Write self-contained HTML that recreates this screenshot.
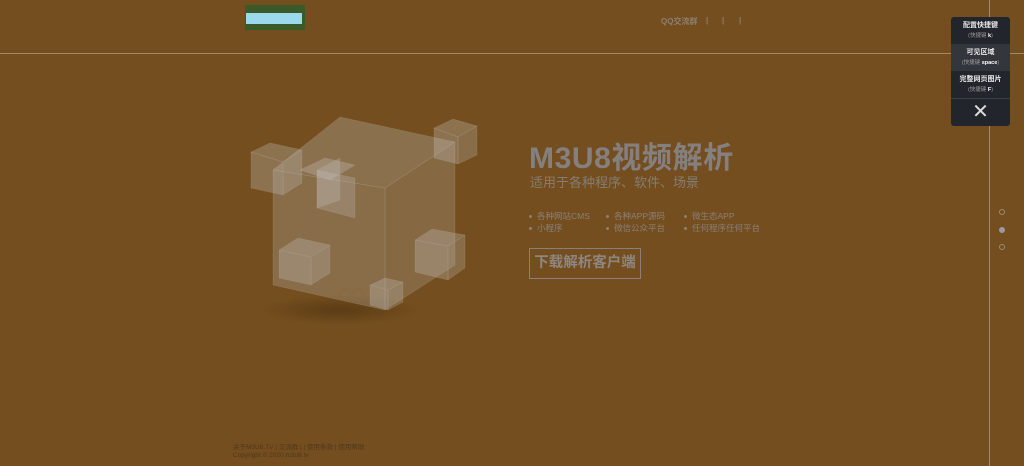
<!DOCTYPE html>
<html><head><meta charset="utf-8"><style>
*{margin:0;padding:0;box-sizing:border-box}
body{width:1024px;height:466px;overflow:hidden;background:#744e1e;font-family:"Liberation Sans","Noto Sans CJK SC",sans-serif;position:relative}
.a{position:absolute}
.hl{left:0;top:53px;width:1024px;height:1px;background:#a2886a}
.vl{left:989px;top:0;width:1px;height:466px;background:#a2886a}
.logo{left:245px;top:5px;width:60px;height:25px;background:#3a5a2a}
.logo i{position:absolute;left:1px;top:8px;width:56px;height:11px;background:#9cd9ec}
.nav{top:16px;font-size:8px;color:#8a8070;font-weight:bold;white-space:nowrap}
.t1{left:529px;top:133px;font-size:30px;font-weight:bold;color:#858080;letter-spacing:0.6px}
.t2{left:530px;top:172px;font-size:13px;color:#857d75}
.li{font-size:8.5px;color:#8a8078;white-space:nowrap}
.li:before{content:"";display:inline-block;width:3px;height:3px;border-radius:50%;background:#8a8078;margin-right:5px;vertical-align:middle}
.btn{left:529px;top:248px;width:112px;height:31px;border:1px solid #8a8078;color:#8e8680;font-size:14.5px;font-weight:bold;text-align:center;line-height:29px}
.ft{left:233px;font-size:6.5px;color:#4e3820;white-space:nowrap}
.panel{left:951px;top:17px;width:59px;height:109px;background:#22262c;border-radius:3px;overflow:hidden}
.it{height:27px;text-align:center;color:#e8e8e8;font-size:7px;font-weight:bold;padding-top:4px;line-height:10px}
.it small{display:block;font-size:5.5px;color:#999;font-weight:normal}
.it small b{color:#fff}
.dot{width:6px;height:6px;border-radius:50%;border:1px solid #9a8a78;left:999px}
</style></head><body>
<div class="a hl"></div><div class="a vl"></div>
<div class="a logo"><i></i></div>
<div class="a nav" style="left:661px">QQ交流群</div>
<div class="a nav" style="left:706px">|</div>
<div class="a nav" style="left:722px">|</div>
<div class="a nav" style="left:739px">|</div>
<svg class="a" style="left:0;top:0" width="1024" height="466">
<defs><radialGradient id="sh"><stop offset="0" stop-color="#4a3010" stop-opacity=".6"/><stop offset="1" stop-color="#4a3010" stop-opacity="0"/></radialGradient></defs>
<ellipse cx="340" cy="310" rx="80" ry="15" fill="url(#sh)"/>
<g fill="#c8c8c8" stroke="#b0a898" stroke-opacity=".35" stroke-width=".5">
<polygon points="273,170 340,117 455,142 385,188" fill-opacity=".28"/>
<polygon points="273,170 385,188 385,310 273,285" fill-opacity=".25"/>
<polygon points="385,188 455,142 455,265 385,310" fill-opacity=".22"/>
<polygon points="300,170 325,158 355,165 330,180" fill-opacity=".3"/>
<polygon points="317,170 340,158 340,200 317,208" fill-opacity=".25"/>
<polygon points="317,170 355,178 355,218 317,208" fill-opacity=".25"/>
<polygon points="251,152 270,143 302,150 283,162" fill-opacity=".3"/>
<polygon points="251,152 283,162 283,195 251,188" fill-opacity=".3"/>
<polygon points="283,162 302,150 302,183 283,195" fill-opacity=".25"/>
<polygon points="434,128 453,119 477,126 458,137" fill-opacity=".3"/>
<polygon points="434,128 458,137 458,164 434,158" fill-opacity=".3"/>
<polygon points="458,137 477,126 477,155 458,164" fill-opacity=".25"/>
<polygon points="279,250 298,238 330,245 311,257" fill-opacity=".3"/>
<polygon points="279,250 311,257 311,285 279,278" fill-opacity=".3"/>
<polygon points="311,257 330,245 330,273 311,285" fill-opacity=".25"/>
<polygon points="415,240 432,229 465,235 448,246" fill-opacity=".3"/>
<polygon points="415,240 448,246 448,280 415,272" fill-opacity=".3"/>
<polygon points="448,246 465,235 465,268 448,280" fill-opacity=".25"/>
<polygon points="370,285 385,278 403,282 388,290" fill-opacity=".3"/>
<polygon points="370,285 388,290 388,310 370,305" fill-opacity=".3"/>
<polygon points="388,290 403,282 403,302 388,310" fill-opacity=".25"/>
</g>
<text x="338" y="301" font-family="Liberation Sans" font-weight="bold" font-size="18" fill="#8a6a40" opacity=".7">CO</text>
</svg>
<div class="a t1">M3U8视频解析</div>
<div class="a t2">适用于各种程序、软件、场景</div>
<div class="a li" style="left:529px;top:210px">各种网站CMS</div>
<div class="a li" style="left:606px;top:210px">各种APP源码</div>
<div class="a li" style="left:684px;top:210px">微生态APP</div>
<div class="a li" style="left:529px;top:222px">小程序</div>
<div class="a li" style="left:606px;top:222px">微信公众平台</div>
<div class="a li" style="left:684px;top:222px">任何程序任何平台</div>
<div class="a btn">下载解析客户端</div>
<div class="a ft" style="top:441px">关于M3U8.TV | 交流群 | | 使用条款 | 使用帮助</div>
<div class="a ft" style="top:452px">Copyright © 2020 m3u8.tv</div>
<div class="a panel">
<div class="it">配置快捷键<small>(快捷键 <b>k</b>)</small></div>
<div class="it" style="background:#33373d">可见区域<small>(快捷键 <b>space</b>)</small></div>
<div class="it">完整网页图片<small>(快捷键 <b>F</b>)</small></div>
<div style="border-top:1px solid #3a3e44;height:28px;text-align:center;color:#ddd;font-size:20px;line-height:27px">✕</div>
</div>
<div class="a dot" style="top:209px"></div>
<div class="a dot" style="top:227px;background:#9a9aa0;border-color:#9a9aa0"></div>
<div class="a dot" style="top:244px"></div>
</body></html>
